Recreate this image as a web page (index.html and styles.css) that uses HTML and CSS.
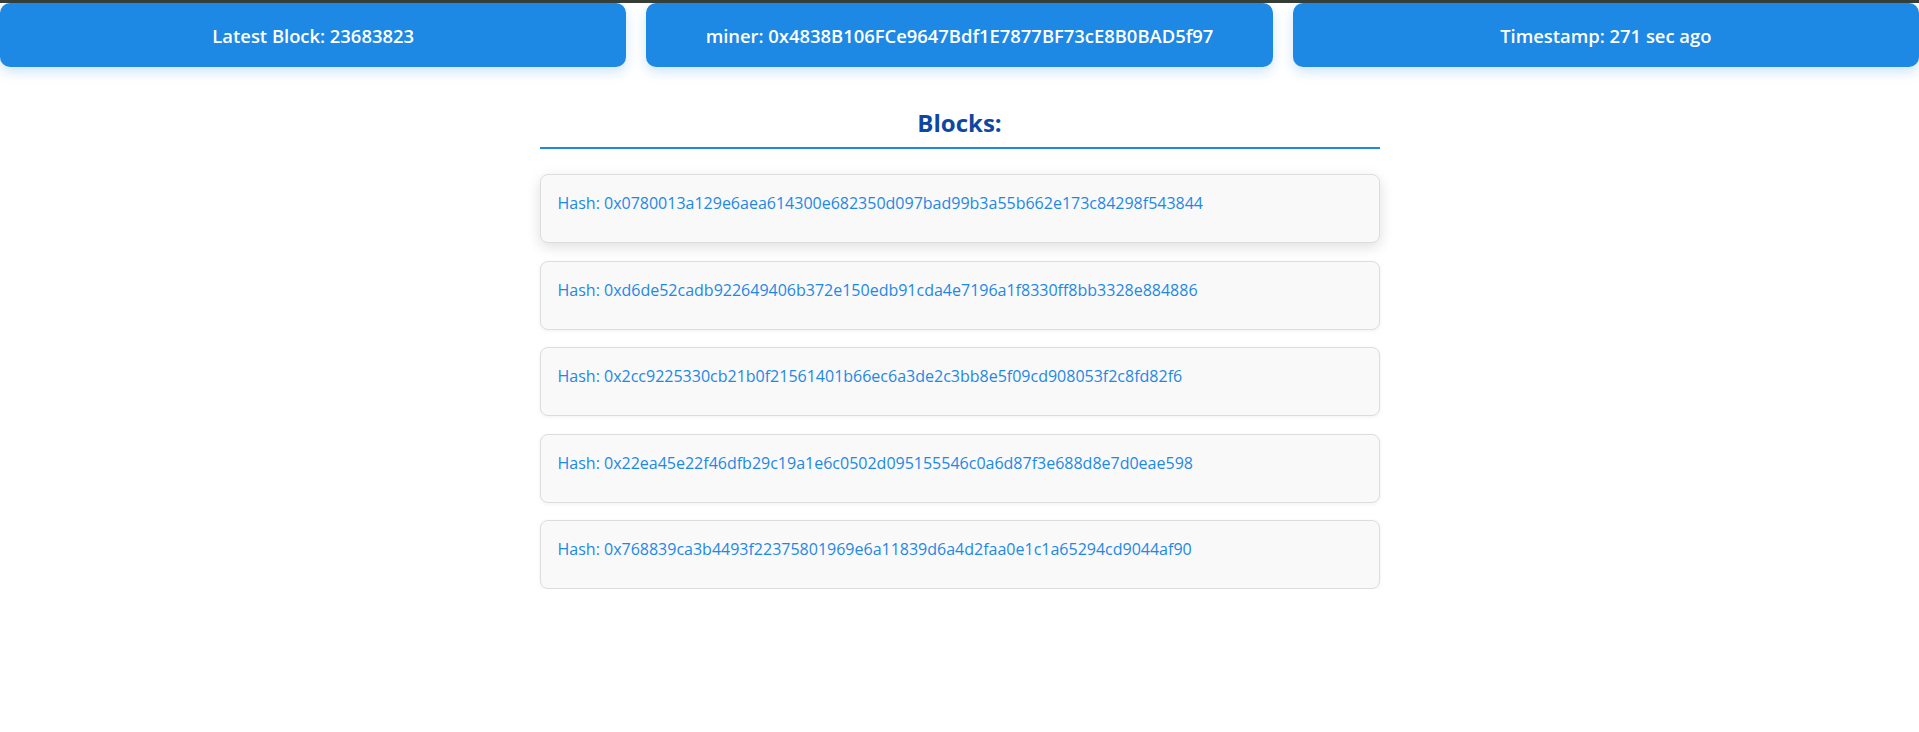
FILE: index.html
```html
<!DOCTYPE html>
<html lang="en">
<head>
<meta charset="utf-8">
<title>Blocks</title>
<link rel="stylesheet" href="styles.css">
</head>
<body>
<div class="window-edge"></div>
<header class="stats">
  <div class="stat">Latest Block: 23683823</div>
  <div class="stat">miner: 0x4838B106FCe9647Bdf1E7877BF73cE8B0BAD5f97</div>
  <div class="stat">Timestamp: 271 sec ago</div>
</header>
<main class="blocks">
  <h2 class="blocks-title">Blocks:</h2>
  <ul class="block-list">
    <li class="block-card is-active"><span class="block-hash">Hash: 0x0780013a129e6aea614300e682350d097bad99b3a55b662e173c84298f543844</span></li>
    <li class="block-card"><span class="block-hash">Hash: 0xd6de52cadb922649406b372e150edb91cda4e7196a1f8330ff8bb3328e884886</span></li>
    <li class="block-card"><span class="block-hash">Hash: 0x2cc9225330cb21b0f21561401b66ec6a3de2c3bb8e5f09cd908053f2c8fd82f6</span></li>
    <li class="block-card"><span class="block-hash">Hash: 0x22ea45e22f46dfb29c19a1e6c0502d095155546c0a6d87f3e688d8e7d0eae598</span></li>
    <li class="block-card"><span class="block-hash">Hash: 0x768839ca3b4493f22375801969e6a11839d6a4d2faa0e1c1a65294cd9044af90</span></li>
  </ul>
</main>
</body>
</html>
```

FILE: styles.css
```css
* {
  box-sizing: border-box;
}

html, body {
  margin: 0;
  padding: 0;
  background: #ffffff;
}

body {
  font-family: "Open Sans", "Noto Sans", sans-serif;
}

.window-edge {
  height: 3px;
  background: #363d35;
}

.stats {
  display: grid;
  grid-template-columns: repeat(3, 1fr);
  gap: 20px;
}

.stat {
  height: 64px;
  display: flex;
  align-items: center;
  justify-content: center;
  background: #1e88e5;
  color: #ffffff;
  font-size: 18.4px;
  font-weight: 600;
  border-radius: 10px;
  box-shadow: 0 5px 12px rgba(30, 136, 229, 0.22);
}

.blocks {
  width: 840px;
  margin: 0 auto;
}

.blocks-title {
  margin: 41px 0 0;
  padding-bottom: 9px;
  line-height: 30px;
  font-size: 24px;
  font-weight: 700;
  color: #0d47a1;
  text-align: center;
  border-bottom: 2px solid #1e88e5;
}

.block-list {
  list-style: none;
  margin: 25px 0 0;
  padding: 0;
  display: flex;
  flex-direction: column;
  gap: 17.6px;
}

.block-card {
  padding: 17px 17px 28px;
  background: #f9f9f9;
  border: 1px solid #dddddd;
  border-radius: 8px;
  box-shadow: 0 1px 4px rgba(0, 0, 0, 0.06);
  line-height: 22px;
}

.block-card.is-active {
  box-shadow: 0 4px 14px rgba(0, 0, 0, 0.13);
}

.block-hash {
  font-size: 16px;
  color: #1e88e5;
}
```
